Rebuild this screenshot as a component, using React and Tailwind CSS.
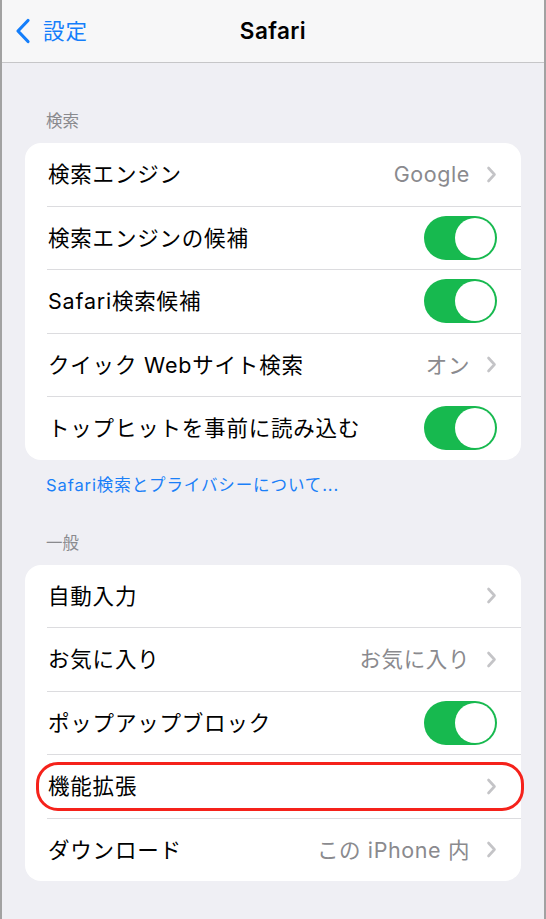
import React from "react";

const font = { fontFamily: '"Inter", "Noto Sans CJK JP", sans-serif' };

function Chevron() {
  return (
    <svg width="11" height="17" viewBox="0 0 11 17" className="shrink-0">
      <path d="M2.5 2 L8.5 8.5 L2.5 15" fill="none" stroke="#c4c4c7" strokeWidth="2.6" strokeLinecap="round" strokeLinejoin="round" />
    </svg>
  );
}

function Toggle() {
  return (
    <div className="w-[73px] h-[44px] rounded-full bg-[#17b94f] flex items-center justify-end px-[2px] shrink-0">
      <div className="w-[40px] h-[40px] rounded-full bg-white" />
    </div>
  );
}

function Row({ label, value, kind, last, ring }) {
  return (
    <div className="relative">
      <div className="h-[62.5px] flex items-center pl-[23px] pr-[24px]">
        <span className="text-[21.5px] text-black flex-1 tracking-[0.8px] whitespace-nowrap">{label}</span>
        {kind === "toggle" ? (
          <Toggle />
        ) : (
          <div className="flex items-center gap-[16px]">
            {value && <span className="text-[21.5px] tracking-[0.6px] text-[#8a8a8e] whitespace-nowrap">{value}</span>}
            <Chevron />
          </div>
        )}
      </div>
      {!last && <div className="ml-[22px] h-px bg-[#dcdcdf]" />}
      {ring && (
        <div className="absolute left-[11px] right-[-3px] top-[7px] h-[49px] rounded-[22px] border-[3px] border-[#f5221b]" />
      )}
    </div>
  );
}

export default function App() {
  const search = [
    { label: "検索エンジン", value: "Google" },
    { label: "検索エンジンの候補", kind: "toggle" },
    { label: "Safari検索候補", kind: "toggle" },
    { label: "クイック Webサイト検索", value: "オン" },
    { label: "トップヒットを事前に読み込む", kind: "toggle" },
  ];
  const general = [
    { label: "自動入力" },
    { label: "お気に入り", value: "お気に入り" },
    { label: "ポップアップブロック", kind: "toggle" },
    { label: "機能拡張", ring: true },
    { label: "ダウンロード", value: "この iPhone 内" },
  ];
  return (
    <div style={font} className="w-[546px] h-[919px] overflow-hidden bg-[#efeff4] border-x-2 border-[#a2a2a2]">
      <div className="h-[63px] bg-[#f7f7f8] border-b border-[#c6c6c8] relative flex items-center justify-center">
        <div className="absolute left-[12px] top-0 h-full flex items-center gap-[11px]">
          <svg width="18" height="26" viewBox="0 0 18 26">
            <path d="M14 2.5 L4 13 L14 23.5" fill="none" stroke="#147efb" strokeWidth="3.2" strokeLinecap="round" strokeLinejoin="round" />
          </svg>
          <span className="text-[21.5px] tracking-[1px] text-[#147efb]">設定</span>
        </div>
        <span className="text-[22.5px] font-semibold text-black tracking-[0.4px]">Safari</span>
      </div>

      <div className="px-[23px]">
        <div className="pt-[48px] pl-[21px] text-[16.5px] leading-[20px] text-[#8a8a8e]">検索</div>
        <div className="mt-[12px] bg-white rounded-[16px] overflow-hidden">
          {search.map((r, i) => (
            <Row key={i} {...r} last={i === search.length - 1} />
          ))}
        </div>
        <div className="mt-[15px] pl-[21px] text-[16.5px] leading-[20px] tracking-[0.9px] text-[#1a7ff8] whitespace-nowrap">Safari検索とプライバシーについて...</div>
        <div className="mt-[38px] pl-[21px] text-[16.5px] leading-[20px] text-[#8a8a8e]">一般</div>
        <div className="mt-[12px] bg-white rounded-[16px]">
          {general.map((r, i) => (
            <Row key={i} {...r} last={i === general.length - 1} />
          ))}
        </div>
      </div>
    </div>
  );
}
